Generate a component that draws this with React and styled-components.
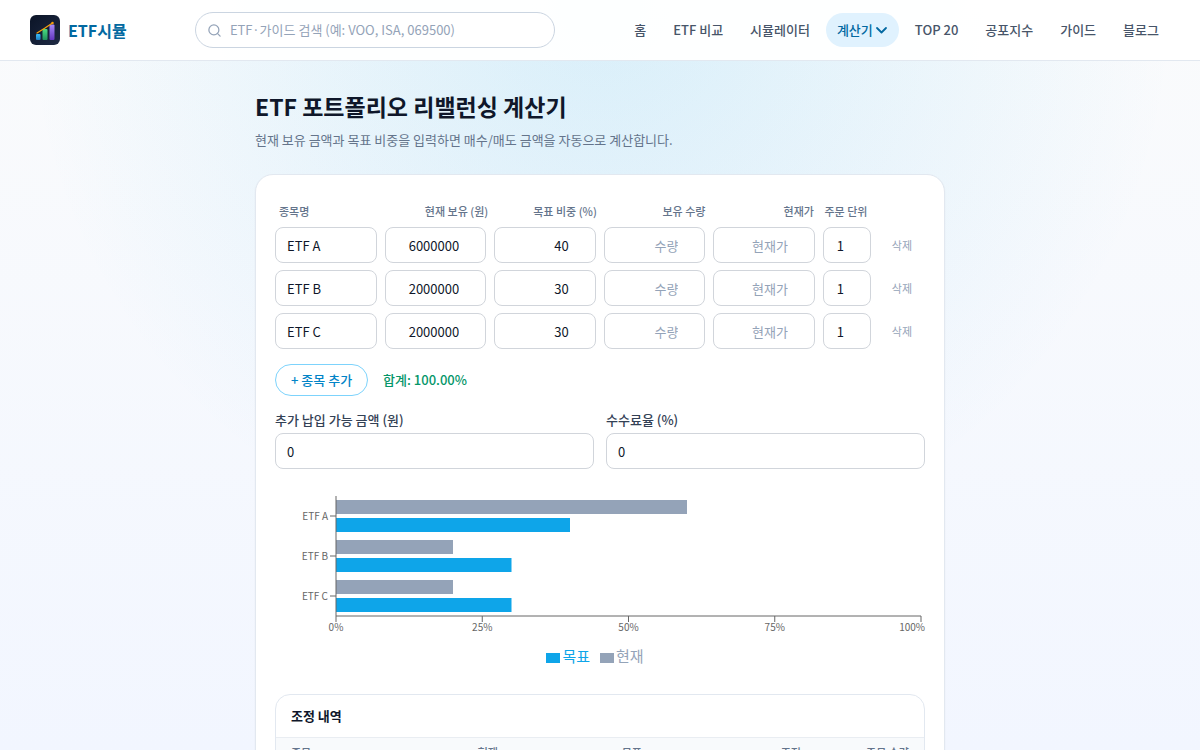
import { useState } from 'react'
import styled, { createGlobalStyle } from 'styled-components'
import { Search } from 'lucide-react'

const GlobalStyle = createGlobalStyle`
  * {
    box-sizing: border-box;
  }
  body {
    margin: 0;
    min-height: 100vh;
    font-family: "Noto Sans CJK KR", sans-serif;
    font-size: 15px;
    line-height: 20px;
    color: #0f172a;
    background:
      radial-gradient(circle at top, rgba(14, 165, 233, 0.14), transparent 60%) fixed,
      linear-gradient(180deg, #fafbfc 0%, #f2f6ff 100%) fixed;
  }
  button,
  input {
    font-family: inherit;
    line-height: 20px;
  }
`

const Header = styled.header`
  display: flex;
  align-items: center;
  justify-content: space-between;
  height: 61px;
  padding: 0 30px;
  background-color: rgba(255, 255, 255, 0.95);
  border-bottom: 1px solid #e2e8f0;
`

const Brand = styled.a`
  display: flex;
  align-items: center;
  gap: 8px;
  color: #0369a1;
  font-size: 16px;
  font-weight: 700;
  text-decoration: none;
`

const SearchBox = styled.label`
  display: flex;
  align-items: center;
  gap: 8px;
  width: 360px;
  height: 36px;
  padding: 0 12px 0 11px;
  background-color: #fff;
  border: 1px solid #cbd5e1;
  border-radius: 18px;
  color: #94a3b8;
`

const SearchInput = styled.input`
  flex: 1;
  min-width: 0;
  padding: 0;
  border: none;
  outline: none;
  background: transparent;
  font-size: 13px;
  color: #0f172a;
  &::placeholder {
    color: #94a3b8;
  }
`

const Nav = styled.nav`
  display: flex;
  gap: 5px;
`

const NavLink = styled.a`
  display: flex;
  align-items: center;
  gap: 2px;
  height: 34px;
  padding: 0 11px;
  border-radius: 17px;
  background-color: ${(props) => (props.$active ? '#e0f2fe' : 'transparent')};
  color: ${(props) => (props.$active ? '#0369a1' : '#475569')};
  font-size: 13px;
  font-weight: 500;
  white-space: nowrap;
  text-decoration: none;
`

const Main = styled.main`
  max-width: 720px;
  margin: 0 auto;
  padding: 30px 15px;
`

const Title = styled.h1`
  margin: 0;
  font-size: 23px;
  line-height: 30px;
  font-weight: 700;
`

const Subtitle = styled.p`
  margin: 8px 0 24px;
  font-size: 13px;
  line-height: 21px;
  color: #64748b;
`

const Card = styled.section`
  padding: 27px 19px 19px;
  background-color: #fff;
  border: 1px solid #e2e8f0;
  border-radius: 18px;
  box-shadow: 0 1px 2px rgba(0, 0, 0, 0.05);
`

const Holdings = styled.div`
  display: flex;
  flex-direction: column;
  gap: 7px;
`

const HoldingRow = styled.div`
  display: grid;
  grid-template-columns: repeat(5, minmax(0, 1fr)) 48px 46px;
  align-items: center;
  gap: 8px;
`

const HoldingHead = styled(HoldingRow)`
  grid-template-columns: repeat(5, minmax(0, 1fr)) 48px 43px;
  padding: 0 4px;
`

const HeadCell = styled.span`
  font-size: 11px;
  line-height: 18px;
  font-weight: 500;
  color: #64748b;
  text-align: ${(props) => props.$align || 'right'};
  white-space: nowrap;
`

const Field = styled.input`
  width: 100%;
  height: 36px;
  padding: 0 11px;
  background-color: #fff;
  border: 1px solid #d1d5db;
  border-radius: 8px;
  color: #0f172a;
  font-size: 13px;
  text-align: ${(props) => props.$align || 'left'};
  &::placeholder {
    color: #94a3b8;
  }
`

const DeleteButton = styled.button`
  padding: 0;
  border: none;
  background: transparent;
  color: #94a3b8;
  font-size: 11px;
  cursor: pointer;
`

const Actions = styled.div`
  display: flex;
  align-items: center;
  gap: 15px;
  margin-top: 15px;
`

const AddButton = styled.button`
  height: 32px;
  padding: 0 15px;
  background-color: #fff;
  border: 1px solid #7dd3fc;
  border-radius: 16px;
  color: #0284c7;
  font-size: 13px;
  font-weight: 500;
  cursor: pointer;
`

const Total = styled.span`
  color: #059669;
  font-size: 13px;
  font-weight: 500;
`

const Options = styled.div`
  display: grid;
  grid-template-columns: 1fr 1fr;
  gap: 12px;
  margin-top: 15px;
`

const OptionLabel = styled.label`
  display: flex;
  flex-direction: column;
  gap: 4px;
  color: #334155;
  font-size: 13px;
  line-height: 18px;
  font-weight: 500;
`

const ChartBox = styled.div`
  height: 180px;
  margin: 22px 0 23px;
`

const ChartSvg = styled.svg`
  display: block;
  width: 100%;
  height: 150px;
  overflow: visible;
`

const Plot = styled.svg`
  width: calc(100% - 65px);
  overflow: visible;
`

const AxisText = styled.text`
  fill: #666;
  font-size: 10px;
`

const Legend = styled.div`
  display: flex;
  justify-content: center;
`

const LegendItem = styled.span`
  display: flex;
  align-items: center;
  gap: 2px;
  margin-right: 10px;
  color: ${(props) => props.$color};
  font-size: 15px;
  line-height: 30px;
  &::before {
    content: '';
    width: 14px;
    height: 10px;
    margin-top: 3px;
    background-color: ${(props) => props.$color};
  }
`

const Panel = styled.section`
  overflow: hidden;
  border: 1px solid #e2e8f0;
  border-radius: 15px;
`

const PanelTitle = styled.h2`
  margin: 0;
  padding: 0 15px;
  border-bottom: 1px solid #e9edf2;
  font-size: 13px;
  line-height: 42px;
  font-weight: 700;
`

const Table = styled.table`
  width: 100%;
  table-layout: fixed;
  border-collapse: collapse;
  font-size: 13px;
`

const Th = styled.th`
  width: ${(props) => props.$width || 'auto'};
  padding: 5px 15px;
  background-color: #f8fafc;
  color: #64748b;
  font-size: 11px;
  line-height: 19px;
  font-weight: 500;
  text-align: ${(props) => props.$align || 'right'};
`

const Td = styled.td`
  padding: 8px 15px;
  border-top: 1px solid #f1f5f9;
  text-align: ${(props) => props.$align || 'right'};
`

const navItems = ['홈', 'ETF 비교', '시뮬레이터', '계산기', 'TOP 20', '공포지수', '가이드', '블로그']

const initialHoldings = [
  { name: 'ETF A', amount: 6000000, target: 40 },
  { name: 'ETF B', amount: 2000000, target: 30 },
  { name: 'ETF C', amount: 2000000, target: 30 },
]

const Logo = () => (
  <svg width="30" height="30" viewBox="0 0 60 60" aria-hidden="true">
    <defs>
      <linearGradient id="bg" x1="0" y1="0" x2="1" y2="1">
        <stop offset="0" stopColor="#0b1426" />
        <stop offset="1" stopColor="#1e2a44" />
      </linearGradient>
      <linearGradient id="blue" x1="0" y1="0" x2="0" y2="1">
        <stop offset="0" stopColor="#38bdf8" />
        <stop offset="1" stopColor="#1f7ec2" />
      </linearGradient>
      <linearGradient id="green" x1="0" y1="0" x2="0" y2="1">
        <stop offset="0" stopColor="#4ade80" />
        <stop offset="1" stopColor="#1f8f5c" />
      </linearGradient>
      <linearGradient id="purple" x1="0" y1="0" x2="0" y2="1">
        <stop offset="0" stopColor="#a78bfa" />
        <stop offset="1" stopColor="#6336c0" />
      </linearGradient>
    </defs>
    <rect width="60" height="60" rx="12" fill="url(#bg)" />
    <rect x="12" y="38" width="9" height="12" rx="2" fill="url(#blue)" />
    <rect x="25" y="28" width="10" height="22" rx="2" fill="url(#green)" />
    <rect x="39" y="19" width="10" height="31" rx="2" fill="url(#purple)" />
    <path d="M14 36 L30 26 L45 16" fill="none" stroke="#f59e0b" strokeWidth="2.5" strokeLinecap="round" />
    <circle cx="45" cy="16" r="2.5" fill="#f59e0b" />
  </svg>
)

const Chevron = () => (
  <svg width="13" height="13" viewBox="0 0 13 13" fill="none" stroke="currentColor" strokeWidth="1.8" strokeLinecap="round" strokeLinejoin="round" aria-hidden="true">
    <path d="M2 4 L6.5 8.5 L11 4" />
  </svg>
)

const Chart = ({ holdings, sum }) => (
  <ChartBox>
    <ChartSvg role="img" aria-label="현재 비중과 목표 비중">
      <Plot x="61" y="5" height="120">
        {holdings.map((item, i) => (
          <g key={item.name}>
            <rect x="0" y={i * 40 + 4} width={`${(item.amount / sum) * 100}%`} height="14" fill="#94a3b8" />
            <rect x="0" y={i * 40 + 22} width={`${item.target}%`} height="14" fill="#0ea5e9" />
            <line x1="-6" x2="0" y1={i * 40 + 20} y2={i * 40 + 20} stroke="#666" />
            <AxisText x="-8" y={i * 40 + 24} textAnchor="end">{item.name}</AxisText>
          </g>
        ))}
        <line x1="0" x2="0" y1="0" y2="120" stroke="#666" />
        <line x1="0" x2="100%" y1="120" y2="120" stroke="#666" />
        {[0, 25, 50, 75, 100].map((tick) => (
          <g key={tick}>
            <line x1={`${tick}%`} x2={`${tick}%`} y1="120" y2="126" stroke="#666" />
            <AxisText x={`${tick}%`} dx={tick === 100 ? 4 : 0} y="135" textAnchor={tick === 100 ? 'end' : 'middle'}>
              {tick}%
            </AxisText>
          </g>
        ))}
      </Plot>
    </ChartSvg>
    <Legend>
      <LegendItem $color="#0ea5e9">목표</LegendItem>
      <LegendItem $color="#94a3b8">현재</LegendItem>
    </Legend>
  </ChartBox>
)

const App = () => {
  const [holdings, setHoldings] = useState(initialHoldings)

  const update = (index, key, value) =>
    setHoldings(holdings.map((item, i) => (i === index ? { ...item, [key]: value } : item)))

  const sum = holdings.reduce((acc, item) => acc + Number(item.amount), 0) || 1
  const totalTarget = holdings.reduce((acc, item) => acc + Number(item.target), 0)

  return (
    <>
      <GlobalStyle />
      <Header>
        <Brand href="#">
          <Logo />
          ETF시뮬
        </Brand>
        <SearchBox>
          <Search size={15} strokeWidth={2} />
          <SearchInput type="text" aria-label="검색" placeholder="ETF·가이드 검색 (예: VOO, ISA, 069500)" />
        </SearchBox>
        <Nav>
          {navItems.map((item) => (
            <NavLink key={item} href="#" $active={item === '계산기'}>
              {item}
              {item === '계산기' && <Chevron />}
            </NavLink>
          ))}
        </Nav>
      </Header>
      <Main>
        <Title>ETF 포트폴리오 리밸런싱 계산기</Title>
        <Subtitle>현재 보유 금액과 목표 비중을 입력하면 매수/매도 금액을 자동으로 계산합니다.</Subtitle>
        <Card>
          <Holdings>
            <HoldingHead>
              <HeadCell $align="left">종목명</HeadCell>
              <HeadCell>현재 보유 (원)</HeadCell>
              <HeadCell>목표 비중 (%)</HeadCell>
              <HeadCell>보유 수량</HeadCell>
              <HeadCell>현재가</HeadCell>
              <HeadCell $align="center">주문 단위</HeadCell>
            </HoldingHead>
            {holdings.map((item, i) => (
              <HoldingRow key={i}>
                <Field aria-label="종목명" value={item.name} onChange={(e) => update(i, 'name', e.target.value)} />
                <Field type="number" $align="right" aria-label="현재 보유 (원)" value={item.amount} onChange={(e) => update(i, 'amount', e.target.value)} />
                <Field type="number" $align="right" aria-label="목표 비중 (%)" value={item.target} onChange={(e) => update(i, 'target', e.target.value)} />
                <Field type="number" $align="right" aria-label="보유 수량" placeholder="수량" />
                <Field type="number" $align="right" aria-label="현재가" placeholder="현재가" />
                <Field type="number" $align="right" aria-label="주문 단위" defaultValue="1" />
                <DeleteButton onClick={() => setHoldings(holdings.filter((_, n) => n !== i))}>삭제</DeleteButton>
              </HoldingRow>
            ))}
          </Holdings>
          <Actions>
            <AddButton onClick={() => setHoldings([...holdings, { name: '', amount: 0, target: 0 }])}>+ 종목 추가</AddButton>
            <Total>합계: {totalTarget.toFixed(2)}%</Total>
          </Actions>
          <Options>
            <OptionLabel>
              추가 납입 가능 금액 (원)
              <Field type="number" defaultValue="0" />
            </OptionLabel>
            <OptionLabel>
              수수료율 (%)
              <Field type="number" defaultValue="0" />
            </OptionLabel>
          </Options>
          <Chart holdings={holdings} sum={sum} />
          <Panel>
            <PanelTitle>조정 내역</PanelTitle>
            <Table>
              <thead>
                <tr>
                  <Th $align="left">종목</Th>
                  <Th>현재</Th>
                  <Th $width="144px">목표</Th>
                  <Th $width="159px">조정</Th>
                  <Th $width="108px">주문 수량</Th>
                </tr>
              </thead>
              <tbody>
                {holdings.map((item, i) => (
                  <tr key={i}>
                    <Td $align="left">{item.name}</Td>
                    <Td>{((item.amount / sum) * 100).toFixed(2)}%</Td>
                    <Td>{item.target}%</Td>
                    <Td>{((sum * item.target) / 100 - item.amount).toLocaleString()}원</Td>
                    <Td>-</Td>
                  </tr>
                ))}
              </tbody>
            </Table>
          </Panel>
        </Card>
      </Main>
    </>
  )
}

export default App
